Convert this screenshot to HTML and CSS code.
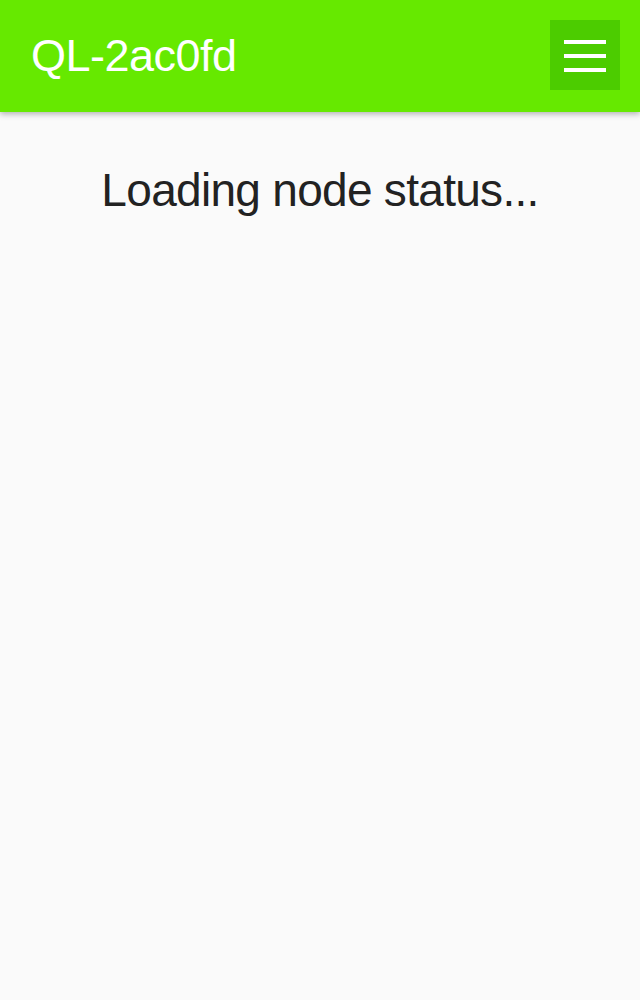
FILE: index.html
```html
<!DOCTYPE html>
<html>
<head>
<meta charset="utf-8">
<link rel="stylesheet" href="styles.css">
</head>
<body>
<header class="topbar">
  <h1 class="title">QL-2ac0fd</h1>
  <button class="menu-btn" aria-label="Menu">
    <span class="bar"></span>
    <span class="bar"></span>
    <span class="bar"></span>
  </button>
</header>
<main class="content">
  <h2 class="loading">Loading node status...</h2>
</main>
</body>
</html>
```
FILE: styles.css
```css
html, body {
  margin: 0;
  padding: 0;
  background: #fafafa;
  font-family: "Liberation Sans", Arial, sans-serif;
}
.topbar {
  height: 112px;
  background: #66e900;
  display: flex;
  align-items: center;
  justify-content: space-between;
  padding: 0 20px 0 31px;
  box-sizing: border-box;
  box-shadow: 0 2px 6px rgba(0,0,0,0.3);
  position: relative;
}
.title {
  margin: 0;
  color: #fff;
  font-size: 45px;
  font-weight: normal;
  letter-spacing: -0.5px;
}
.menu-btn {
  align-self: flex-start;
  margin-top: 20px;
  width: 70px;
  height: 70px;
  background: #4ccc00;
  border: none;
  padding: 20px 0 0;
  box-sizing: border-box;
  display: flex;
  flex-direction: column;
  align-items: center;
  justify-content: flex-start;
  gap: 10px;
}
.bar {
  display: block;
  width: 42px;
  height: 4px;
  background: #fff;
}
.content {
  text-align: center;
  padding-top: 51px;
}
.loading {
  margin: 0;
  font-size: 46px;
  font-weight: normal;
  color: #222;
  letter-spacing: -0.7px;
  line-height: normal;
}
```
